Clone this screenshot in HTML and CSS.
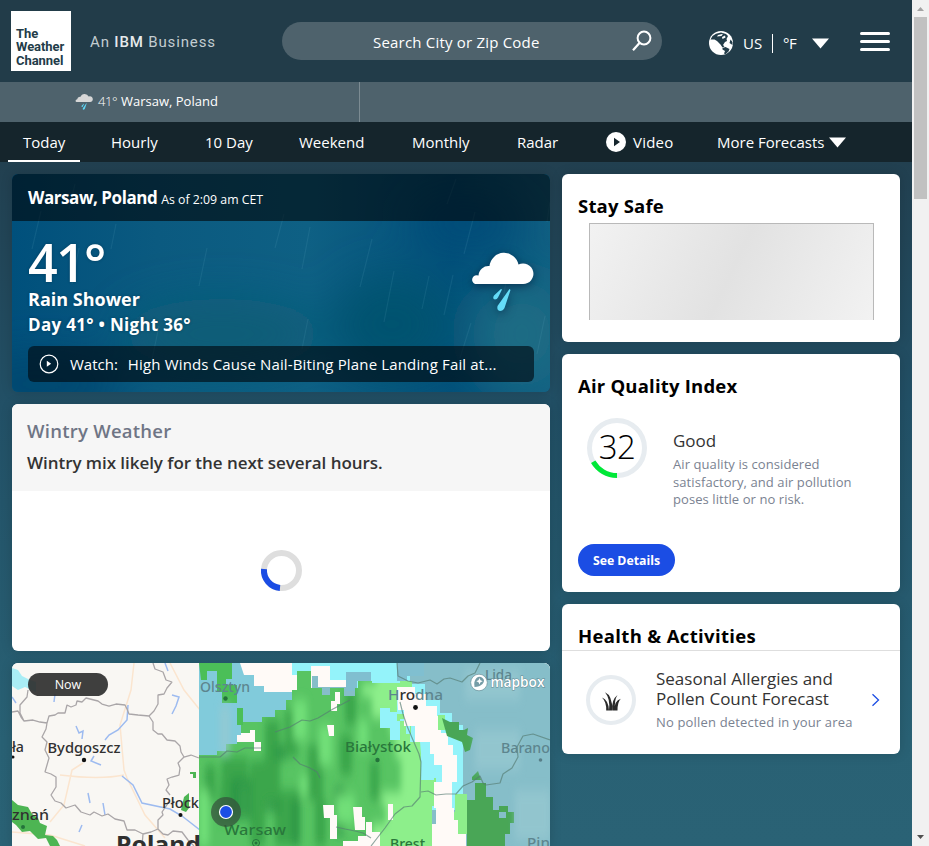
FILE: index.html
```html
<!DOCTYPE html>
<html lang="en">
<head>
<meta charset="utf-8">
<title>Weather - Warsaw, Poland</title>
<link rel="stylesheet" href="styles.css">
</head>
<body>
<div class="page">
  <header class="header">
    <div class="logo">The<br>Weather<br>Channel</div>
    <div class="tagline">An <b>IBM</b> Business</div>
    <div class="search">
      <span class="search-text">Search City or Zip Code</span>
      <svg class="search-icon" width="20" height="22" viewBox="0 0 20 22" fill="none" stroke="#fff" stroke-width="2"><circle cx="12" cy="8" r="6.4"/><path d="M7.7 12.7 1 20.3" stroke-width="2.2"/></svg>
    </div>
    <div class="locale">
      <svg width="24" height="24" viewBox="0 0 24 24"><circle cx="12" cy="12" r="12" fill="#fff"/><path fill="#223c49" d="M7 2.800 12 1.500 17 3 19 5 17.500 8 18 10 16 11 14 14 15.500 15.500 13.500 16.500 11.500 13.500 8 10 5.500 8.500 1.500 8.500 3.500 5ZM13.500 17 16.500 16 20.500 18 19.500 20.500 16.500 23.200 15 22.500 16 20 13.500 18.500ZM21.500 8.500 23.500 11 23.500 14 20.500 12Z"/><path fill="#fff" d="M9 4 14 2.800 12.500 5 8 5.500ZM13 6 16 4.500 16.500 6.500 13.500 8Z"/></svg>
      <span class="country">US</span><i class="bar"></i><span class="unit">°F</span>
      <svg class="caret" width="17" height="11" viewBox="0 0 17 11"><path d="M0 .5h17l-8.500 10z" fill="#fff"/></svg>
    </div>
    <div class="burger"><i></i><i></i><i></i></div>
  </header>
  <div class="places">
    <div class="place">
      <svg width="18" height="17" viewBox="0 0 62 58"><path fill="#d7d7d7" d="M6 31a4.500 4.500 0 0 1 1-9A11 11 0 0 1 19 13 15 15 0 0 1 47 12 10 10 0 1 1 52 31Z"/><path fill="#5fd6f5" d="M30 37 23 44q-2 3 1 4 2 0 3-2l4-8ZM39 35 27 52q-2 5 2 5 3 0 5-3l6-18Z"/></svg>
      <span class="place-temp">41°</span><span class="place-name">Warsaw, Poland</span>
    </div>
  </div>
  <nav class="nav">
    <a class="active"><span>Today</span></a><a><span>Hourly</span></a><a><span>10 Day</span></a><a><span>Weekend</span></a><a><span>Monthly</span></a><a><span>Radar</span></a>
    <a class="video"><svg width="20" height="20" viewBox="0 0 20 20"><circle cx="10" cy="10" r="10" fill="#fff"/><path d="M8 5.800 14 10 8 14.200Z" fill="#15252c"/></svg><span>Video</span></a>
    <a class="more"><span>More Forecasts</span><svg width="17" height="11" viewBox="0 0 17 11"><path d="M0 .5h17l-8.500 10z" fill="#fff"/></svg></a>
  </nav>
  <main class="content">
    <div class="col-main">
      <section class="card current">
        <svg class="sky" width="538" height="218" viewBox="0 0 538 218">
          <defs>
            <linearGradient id="g" x1="0" y1="0" x2="1" y2="0"><stop offset="0" stop-color="#00507c"/><stop offset=".27" stop-color="#0b5a80"/><stop offset=".55" stop-color="#0e6084"/><stop offset=".82" stop-color="#02507a"/><stop offset="1" stop-color="#105f82"/></linearGradient>
            <filter id="b" filterUnits="userSpaceOnUse" x="-150" y="-150" width="850" height="520"><feGaussianBlur stdDeviation="22"/></filter>
          </defs>
          <rect width="538" height="218" fill="url(#g)"/>
          <g filter="url(#b)"><ellipse cx="210" cy="160" rx="100" ry="35" fill="#115d77"/><ellipse cx="30" cy="210" rx="80" ry="28" fill="#00466e"/><ellipse cx="380" cy="150" rx="60" ry="50" fill="#00526f"/><ellipse cx="510" cy="160" rx="50" ry="55" fill="#1a6c84"/><ellipse cx="455" cy="50" rx="55" ry="25" fill="#004b78"/></g>
          <g stroke="#6eb0ca" stroke-opacity=".13" stroke-width="1.200"><path d="M20 75l9-38M63 10l-6 25M99 75l5-25M187 112l8-38M263 74l9-34M290 95l8-42M348 113l12-48M372 148l10-51M432 141l9-40M452 80l11-42M410 135l7-33M490 130l7-38M448 184l11-35M525 180l8-38M60 110l7-36M435 30l9-25M535 48l3-20M139 190l8-38M290 175l6-30"/></g>
        </svg>
        <div class="current-head"><b>Warsaw, Poland</b><span>As of 2:09 am CET</span></div>
        <div class="current-body">
          <div class="current-row">
            <div>
              <div class="temp">41°</div>
              <div class="phrase">Rain Shower</div>
              <div class="range">Day 41° • Night 36°</div>
            </div>
            <svg class="shower" width="62" height="58" viewBox="0 0 62 58"><path fill="#fff" d="M4 31a4.300 4.300 0 0 1 3.500-8.500A10 10 0 0 1 18.500 13 14.700 14.700 0 0 1 47.500 11.500 10.300 10.300 0 1 1 52 31Z"/><path fill="#64dcf8" d="M30 36 23 42.500q-2 3.500 1 4 2 0 3-2l4-8ZM38.500 36 26.500 53q-1 4.500 2.500 5 3 0 4.500-3l6-18Z"/></svg>
          </div>
          <div class="watch">
            <svg width="20" height="20" viewBox="0 0 20 20"><circle cx="10" cy="10" r="8.800" fill="none" stroke="#fff" stroke-width="1.200"/><path d="M7.800 6.800 12.200 9.800 7.800 12.800Z" fill="#fff"/></svg>
            <span class="watch-label">Watch:</span><span class="watch-title">High Winds Cause Nail-Biting Plane Landing Fail at...</span>
          </div>
        </div>
      </section>
      <section class="card wintry">
        <div class="wintry-head"><h3>Wintry Weather</h3><p>Wintry mix likely for the next several hours.</p></div>
        <div class="loading"><svg width="42" height="42" viewBox="0 0 42 42" fill="none" stroke-width="6"><circle cx="21.500" cy="20.500" r="17.500" stroke="#dedede"/><path d="M4 19A17.500 17.500 0 0 0 20 37.900" stroke="#1b4de4"/></svg></div>
      </section>
      <section class="card map">
        <svg width="538" height="183" viewBox="12 663 538 183">
          <defs>
            <filter id="s" x="-30%" y="-30%" width="160%" height="160%"><feGaussianBlur stdDeviation="3 6"/></filter>
            <filter id="t" x="-5%" y="-5%" width="110%" height="110%"><feGaussianBlur stdDeviation=".7"/></filter>
            <clipPath id="gc"><path id="gp" d="M199 755H217V751H226V744H237V735H241V722H262V717H275V710H286V700H292V690H297V671H311V688H322V695H330V688H344V696H355V688H358V681H372V683H400V700H397V714H411V742H421V765H427V778H436V795H434V806H432V824H436V846H199Z"/></clipPath>
          </defs>
          <rect x="12" y="663" width="538" height="183" fill="#f9f7f3"/>
          <g fill="none" stroke="#fbe5cf" stroke-width="1.500"><path d="M134 663 131 690 120 725 124 770 127 778 145 815 165 838M83 763 72 770 64 805 50 822M60 775Q100 780 124 775M170 663 184 690 200 710M12 832 50 835 85 846"/></g>
          <g fill="none" stroke="#9dbbf0" stroke-width="1.500"><path d="M128 705 127 720 118 730 109 735 105 740M122 776 133 785 142 803 170 809 182 816 200 830 222 829M103 803 105 815M88 793 90 803M76 726 79 733 83 731 82 739M94 756 91 761 101 765M172 695 179 697 176 706 172 714M165 663 168 671M82 825 79 832M12 697 16 703M55 694 54 702"/></g>
          <g fill="none" stroke="#aaa6a8" stroke-width="1.300" stroke-linejoin="bevel"><path d="M12 712 18 711 21 717 24 721 33 720 40 722 47 723 49 716 55 715 58 713 65 713 67 705 71 707 76 705 77 701 82 702 86 698 98 701 102 704 109 706 116 704 125 705 127 709 129 714 138 715 149 716 153 722 153 730 158 734 162 734 167 740 175 741 180 746 181 752 184 757 178 763 180 768 179 775 172 777 167 779 169 785 166 790 170 795M47 723 46 729 42 737 47 742 45 750 49 758 45 772 51 774 56 777 56 787 51 795 55 801 61 803 66 808 75 805 81 812 90 815 94 812 102 816 108 814 115 819 124 821 127 830 135 830 143 834 151 832 158 829 158 820 163 815 162 812 169 802M158 829 163 834 168 835 173 831 182 832 188 840 194 846M149 716 154 711 158 704 158 695 164 694 167 688 172 682 166 680 163 672 155 669 153 663M24 721 20 713 20 705 27 697 28 690M184 757 191 755 199 758M143 834 142 846"/></g>
          <path fill="#8deaf5" opacity=".75" d="M12 668 18 670 22 676 30 680 36 682V692L25 687 18 690 12 686Z"/>
          <path fill="#4db553" d="M12 800 18 805 28 807 32 814 38 818 40 823 47 826 45 835 53 836 57 840 60 846H50L46 838 38 839 30 831 22 832 16 825 12 822ZM184 797 189 793V808L186 812 181 810ZM190 772H196V778H193V774H190Z"/>
          <g filter="url(#t)">
            <path d="M199 663H550V846H199Z" fill="#86bec9"/>
            <path fill="#81cbdb" d="M199 663H300V760H199Z"/>
            <path fill="#fffaf7" d="M240 663H312V692H264V686H254V675H244Z"/>
            <path fill="#94f3fa" d="M292 663H410V684H425V700H440V713H452V725H463V795H455V810H395V700H357V681H330V667H318V675H292Z"/>
            <path fill="#80bfd0" d="M346 672H371V681H357V691H346ZM397 663H424V676H407V681H397Z"/>
            <path fill="#fffaf7" d="M311 666H330V680H346V687H318V676H311Z"/>
            <use href="#gp" fill="#58c463"/>
            <path fill="#4cbf58" d="M199 663H232V679H226V685H237V703H222V692H217V671H207V680H201ZM237 708H243V725H237Z"/>
            <g clip-path="url(#gc)">
              <g filter="url(#s)">
                <path fill="#8def8b" d="M412 670H376V684H362V696H372V718H390V735H395V758H401V792H382V806H386V824H372V860H440V670Z"/>
                <path fill="#3ba64b" d="M222 757H248V785H238V820H218ZM265 720H280V800H265ZM285 710H298V757H285ZM308 745H323V800H308ZM250 760H265V846H250ZM345 690H356V725H345ZM275 790H300V846H275ZM315 800H326V846H315ZM370 760H379V800H370ZM340 735H352V775H340ZM205 765H216V800H205Z"/><path fill="#279043" opacity=".7" d="M275 745H287V760H275ZM231 778H252V820H231ZM292 800H300V846H292ZM265 800H280V812H265ZM334 787H345V835H334Z"/><path fill="#71df78" d="M293 700H307V740H293ZM319 725H332V765H319ZM199 790H209V846H199ZM336 795H355V824H336ZM300 775H308V795H300ZM358 720H368V750H358Z"/></g>
              <path fill="#fffaf7" d="M237 733H250V730H255V742H261V751H254V742H237ZM335 692H340V704H337V711H331V701H335ZM327 725H334V736H329ZM323 805H334V815H337V839H330V818H324ZM353 807H362V817H365V830H355ZM388 804H393V820H388ZM366 822H372V832H380V846H343V841H358V836H366Z"/>
              <path fill="#94f3fa" d="M380 708H390V712H397V721H406V734H421V780H434V742H410V719H400V740H390V728H380Z"/>
            </g>
            <path fill="#94f3fa" d="M420 742H434V751H442V776H430V765H422Z"/>
            <path fill="#fffaf7" d="M397 687H415V694H426V706H437V716H441V733H448V745H453V755H457V782H452V808H454V820H458V834H466V846H432V824H436V808H434V782H442V765H434V754H430V742H415V726H404V710H398Z"/>
            <path fill="#8def8b" d="M455 794H467V834H458V820H454V812H455ZM400 681H412V687H400ZM438 715H445V730H438Z"/>
            <path fill="#48a657" d="M442 718 450 722H459V730H464L468 728 467 735 473 738 470 750 465 752 462 742 447 736ZM467 800H475V783H486V797H493V810H499V806H508V812H514V823H510V834H505V846H467ZM472 777 478 771 481 780H472Z"/>
            <path fill="#86bec9" d="M499 812H506V818H499Z"/>
            <g filter="url(#s)" fill="#98c9d1" opacity=".7"><path d="M465 670H520V700H465ZM475 730H520V770H475ZM515 790H550V840H515ZM220 705H230V755H220Z"/></g>
          </g>
          <g fill="none" stroke="#557b72" stroke-width="1.200" opacity=".65" stroke-linejoin="bevel"><path d="M397 663 398 676 408 681 418 683 430 680 437 684 444 679 450 678 462 682 468 676 475 673 480 663M400 702 403 714 407 726 413 740 419 754 421 762 420 797 412 806 404 807 395 814 390 821 385 828 378 837 371 846M421 792 428 791 436 795 446 794 456 794M275 732 290 727 302 720 310 721 318 718 333 709 350 700M199 757 220 757 227 751 237 752 245 748 262 748M293 757 300 764 310 768 317 772 320 778M456 794 463 786 472 782 480 776 483 783 486 785 500 783 503 774 512 768 518 757 517 747 523 736 533 734 550 740M336 827 345 829 355 831 363 833 371 838"/></g>
          <g class="map-labels">
            <text x="12" y="752" textLength="12" lengthAdjust="spacingAndGlyphs">ła</text><text x="47.500" y="753" textLength="73" lengthAdjust="spacingAndGlyphs">Bydgoszcz</text><text x="12" y="820" textLength="37" lengthAdjust="spacingAndGlyphs">znań</text><text x="162" y="808" textLength="37" lengthAdjust="spacingAndGlyphs">Płock</text>
            <text class="muted" x="200" y="691.500" textLength="50" lengthAdjust="spacingAndGlyphs">Olsztyn</text><text x="388" y="700" textLength="55" lengthAdjust="spacingAndGlyphs"><tspan class="muted">H</tspan>ro<tspan class="muted">dna</tspan></text>
            <text class="green" x="345" y="752" textLength="66" lengthAdjust="spacingAndGlyphs">Białystok</text><text class="green warsaw" x="224" y="835" textLength="62" lengthAdjust="spacingAndGlyphs">Warsaw</text><text class="green" x="390" y="849" textLength="35" lengthAdjust="spacingAndGlyphs">Brest</text>
            <text class="muted" x="501" y="753" textLength="49" lengthAdjust="spacingAndGlyphs">Barano</text><text class="muted" x="485" y="680">Lida</text><text class="muted" x="527" y="848" textLength="23" lengthAdjust="spacingAndGlyphs">Pin</text>
            <text class="country-name" x="116" y="853" textLength="85" lengthAdjust="spacingAndGlyphs">Poland</text>
          </g>
          <g fill="#111"><circle cx="84" cy="760" r="2.200"/><circle cx="180.500" cy="815" r="2"/><circle cx="415.500" cy="707.500" r="2.400"/><circle cx="13" cy="757" r="1.500"/></g>
          <g fill="#24723b"><circle cx="225.500" cy="698.500" r="2.200"/><circle cx="377.500" cy="760" r="2.200"/><circle cx="23" cy="827" r="2"/></g><circle cx="540.500" cy="760" r="1.800" fill="#587f88"/><circle cx="256" cy="843" r="3.500" fill="none" stroke="#24723b"/><circle cx="256" cy="843" r="1.500" fill="#24723b"/>
          <circle cx="226" cy="812" r="15" fill="#34503b" fill-opacity=".72"/><circle cx="226" cy="812" r="6.500" fill="#1b4de4" stroke="#fff" stroke-width="1.200"/>
          <g><circle cx="479" cy="682.500" r="8.300" fill="#fff" stroke="#5f858f" stroke-opacity=".6"/><path d="M474.500 687q-1-6 2-9 3-2.500 6 0t0 6q-3 3-8 3Z" fill="#769da7"/><path d="m479.500 678 1 2.200 2.200 1-2.200 1-1 2.200-1-2.200-2.200-1 2.200-1Z" fill="#fff"/><text class="mapbox" x="490.500" y="686.500" textLength="54" lengthAdjust="spacingAndGlyphs">mapbox</text></g>
        </svg>
        <span class="now">Now</span>
      </section>
    </div>
    <aside class="col-side">
      <section class="card safe"><h2>Stay Safe</h2><div class="placeholder"></div></section>
      <section class="card aqi">
        <h2>Air Quality Index</h2>
        <div class="aqi-row">
          <div class="dial"><svg width="60" height="60" viewBox="0 0 60 60" fill="none" stroke-width="5"><circle cx="30" cy="30" r="27.500" stroke="#e7ecf0"/><path d="M30 57.500A27.500 27.500 0 0 1 6.200 43.800" stroke="#00e838"/></svg><span>32</span></div>
          <div><div class="aqi-level">Good</div><p class="aqi-text">Air quality is considered<br>satisfactory, and air pollution<br>poses little or no risk.</p></div>
        </div>
        <a class="button"><span>See Details</span></a>
      </section>
      <section class="card health">
        <h2>Health &amp; Activities</h2>
        <div class="health-row">
          <div class="ring"><svg width="19" height="19" viewBox="0 0 19 19" fill="#2b2b2b"><path d="M3 .3Q10.500 3.500 10.300 18.500H7Q8.500 7 3 .3ZM0 5.500Q6.500 8 7 18.500H4.200Q4.500 10 0 5.500ZM15.500 3Q12 8 13 18.500H10.500Q9 8 15.500 3ZM18.800 6.800Q15.500 10 15.500 18.500H12.500Q12 9 18.800 6.800Z"/></svg></div>
          <div class="health-info"><div class="health-title">Seasonal Allergies and<br>Pollen Count Forecast</div><div class="health-note">No pollen detected in your area</div></div>
          <svg class="chevron" width="9" height="14" viewBox="0 0 9 14"><path d="m1.500 1.200 6 5.800-6 5.800" fill="none" stroke="#1b4de4" stroke-width="1.300"/></svg>
        </div>
      </section>
    </aside>
  </main>
</div>
<div class="scrollbar"><svg width="7" height="4" viewBox="0 0 7 4"><path d="M0 4 3.500 0 7 4Z" fill="#a3a3a3"/></svg><i class="thumb"></i><svg class="down" width="7" height="4" viewBox="0 0 7 4"><path d="M0 0 3.500 4 7 0Z" fill="#505050"/></svg></div>
</body>
</html>
```
FILE: styles.css
```css
* { box-sizing: border-box; }
body { margin: 0; display: flex; width: 929px; height: 846px; overflow: hidden; font: 15px "Open Sans", "Noto Sans", sans-serif; color: #fff; }
h2, h3, p { margin: 0; }
svg { display: block; flex: none; }
span { white-space: nowrap; }
.page { width: 912px; height: 846px; overflow: hidden; background: linear-gradient(#224050 162px, #225066 405px, #296174 740px, #2a6275); }

.header { height: 82px; background: #223c49; display: flex; align-items: flex-start; padding: 11px 22px 0 11px; }
.logo { width: 60px; height: 60px; background: #fff; color: #223c49; font: 700 13px/13.4px Roboto, sans-serif; padding: 16px 0 0 5px; letter-spacing: -.05px; }
.tagline { width: 192px; margin: 19px 0 0 19px; font: 15px/24px Roboto, sans-serif; letter-spacing: .85px; color: #c3cdd1; }
.tagline b { font-weight: 500; color: #e5eaec; }
.search { width: 380px; height: 38px; margin-top: 11px; border-radius: 19px; background: #4e626c; display: flex; align-items: center; padding: 1px 10px 0 91px; justify-content: space-between; }
.search-text { letter-spacing: .2px; }
.search-icon { margin-top: -1px; }
.locale { display: flex; align-items: center; margin: 20px 0 0 47px; height: 24px; }
.country { margin-left: 10px; width: 20px; }
.bar { width: 1px; height: 19px; background: #fff; margin: 0 10px 0 9px; }
.unit { width: 15px; letter-spacing: -.3px; }
.caret { margin-left: 14px; }
.burger { margin: 21px 0 0 auto; width: 30px; display: flex; flex-direction: column; gap: 5px; }
.burger i { height: 3px; border-radius: 2px; background: #fff; }

.places { height: 40px; background: #4e626c; display: flex; }
.place { width: 360px; border-right: 1px solid #7c8b92; padding: 0 0 2px 75px; display: flex; align-items: center; font-size: 13px; }
.place-temp { margin: 0 4px 0 5px; width: 19px; font-weight: 300; letter-spacing: -.4px; }

.nav { height: 40px; background: #15252c; display: flex; }
.nav a { display: flex; align-items: center; height: 40px; }
.nav .active { margin: 0 15px 0 8px; width: 72px; padding-left: 15px; border-bottom: 2px solid #fff; padding-top: 2px; }
.nav a:nth-child(2) { margin: 0 46px 0 16px; width: 48px; }
.nav a:nth-child(3) { width: 49px; margin-right: 45px; }
.nav a:nth-child(4) { width: 66px; margin-right: 47px; }
.nav a:nth-child(5) { width: 59px; margin-right: 46px; }
.nav a:nth-child(6) { width: 42px; margin-right: 47px; }
.nav .video { gap: 7px; width: 69px; margin-right: 42px; }
.nav .video span { letter-spacing: .2px; }
.nav .more { gap: 5px; }

.content { display: flex; gap: 12px; padding: 12px; }
.col-main, .col-side { display: flex; flex-direction: column; gap: 12px; }
.col-main { width: 538px; }
.col-side { width: 338px; color: #000; }
.card { position: relative; overflow: hidden; border-radius: 6px; background: #fff; flex: none; box-shadow: 0 0 12px rgba(0, 0, 0, .15); }
.card h2 { font-size: 18.5px; line-height: 24px; font-weight: 700; padding: 20px 16px 0; letter-spacing: .2px; }

.current { height: 218px; background: #0b5a80; }
.sky { position: absolute; inset: 0; }
.current-head { position: relative; height: 47px; background: rgba(0, 0, 0, .58); padding: 0 16px; display: flex; align-items: baseline; line-height: 47px; gap: 4px; }
.current-head b { font-size: 17px; font-weight: 700; letter-spacing: -.45px; }
.current-head span { font-size: 12.300px; }
.current-body { position: relative; padding: 16px; }
.current-row { display: flex; justify-content: space-between; text-shadow: 0 0 3px rgba(0, 30, 50, .4); height: 109px; }
.temp { font-size: 52px; line-height: 50px; font-weight: 600; letter-spacing: -1.7px; }
.phrase { font-size: 18px; line-height: 25px; font-weight: 700; }
.range { font-size: 17px; line-height: 25px; font-weight: 700; letter-spacing: .3px; }
.shower { margin: 16px 1px 0 0; overflow: visible; filter: drop-shadow(0 2px 5px rgba(0, 20, 50, .6)); }
.watch { height: 36px; border-radius: 6px; width: 506px; background: rgba(0, 10, 18, .65); display: flex; align-items: center; padding: 0 11px; }
.watch-label { margin: 0 10px 0 11px; }
.watch-title { letter-spacing: .15px; }

.wintry { height: 247px; }
.wintry-head { height: 87px; padding: 14px 15px; background: #f6f6f6; color: #333; }
.wintry h3 { font-size: 18.5px; line-height: 26px; font-weight: 600; color: #6f7585; letter-spacing: .25px; }
.wintry p { font-size: 17px; line-height: 24px; margin-top: 7px; font-weight: 600; letter-spacing: -.05px; }
.loading { display: flex; justify-content: center; padding-top: 59px; }

.map { height: 183px; border-radius: 6px 6px 0 0; }
.map-labels { font: 500 13.500px "Noto Sans", sans-serif; fill: #303030; }
.map-labels .muted { fill: #5d858e; }
.map-labels .green { fill: #29773b; }
.map-labels .warsaw { font-size: 15px; }
.map-labels .country-name { font-size: 23px; font-weight: 700; }
.mapbox { font: 600 15px "Open Sans", sans-serif; fill: #fff; stroke: #62868f; stroke-width: 1px; paint-order: stroke; }
.now { position: absolute; left: 16px; top: 10px; width: 80px; height: 23px; border-radius: 12px; background: rgba(42, 42, 42, .9); font-size: 12.500px; line-height: 24px; text-align: center; }

.safe { height: 168px; }
.placeholder { width: 285px; height: 97px; margin: 5px 0 0 27px; border: 1px solid #b9b9b9; border-bottom: 0; background: linear-gradient(115deg, #f2f2f2, #e2e2e2 50%, #f2f2f2); }
.aqi { height: 238px; }
.aqi-row { display: flex; padding: 20px 0 0 25px; }
.dial { width: 60px; height: 60px; margin-right: 26px; position: relative; }
.dial span { position: absolute; inset: 0; text-align: center; font-size: 33px; line-height: 57px; font-weight: 300; letter-spacing: -.5px; }
.aqi-level { font-size: 17px; line-height: 24px; margin-top: 11px; color: #333; }
.aqi-text { font-size: 13px; line-height: 17.500px; color: #7a8291; margin-top: 3px; letter-spacing: .08px; }
.button { display: flex; align-items: center; justify-content: center; width: 97px; height: 32px; border-radius: 16px; background: #1b4de4; color: #fff; font-size: 12.300px; font-weight: 700; margin: 35px 0 0 16px; padding-top: 1px; }
.health { height: 150px; }
.health h2 { height: 47px; border-bottom: 1px solid #dedede; letter-spacing: .35px; }
.health-row { display: flex; padding: 18px 20px 0 24px; }
.ring { width: 50px; height: 50px; margin: 6px 20px 0 0; border: 4px solid #e7ecf0; border-radius: 50%; display: flex; align-items: center; justify-content: center; padding-top: 2px; }
.health-title { font-size: 17px; line-height: 20px; color: #333; }
.health-note { font-size: 13px; line-height: 18px; color: #7a8291; margin-top: 4px; letter-spacing: .17px; }
.chevron { margin: 24px 0 0 auto; }

.scrollbar { width: 17px; height: 846px; background: #f1f1f1; display: flex; flex-direction: column; align-items: center; padding: 7px 0; }
.thumb { width: 13px; height: 182px; background: #c1c1c1; margin-top: 6px; }
.down { margin-top: auto; }
```
